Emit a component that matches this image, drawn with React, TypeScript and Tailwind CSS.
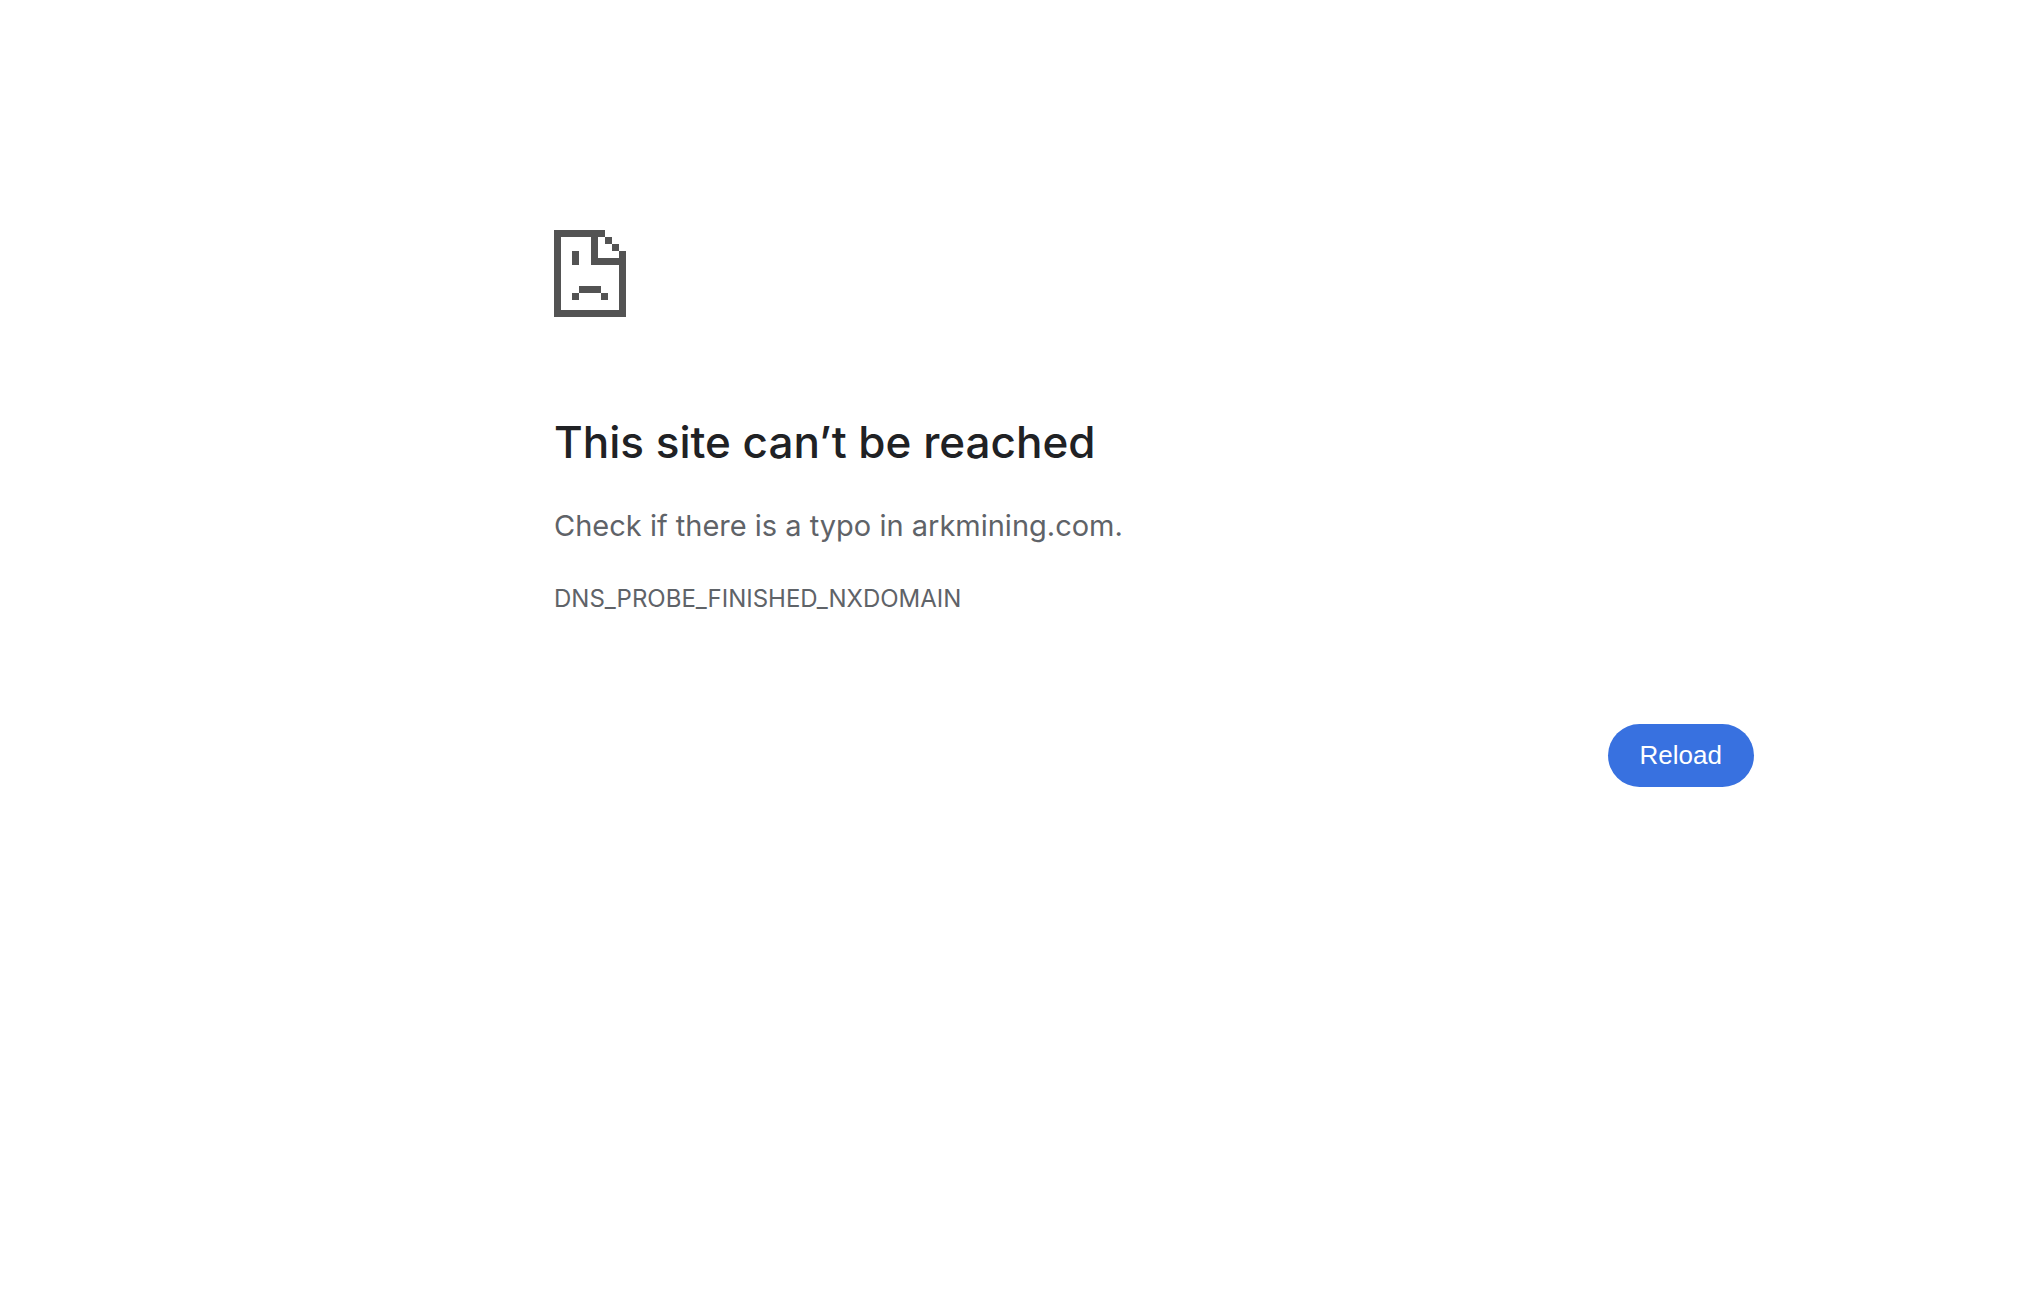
function SadPageIcon() {
  return (
    <svg
      viewBox="0 0 72 87"
      className="h-[87px] w-[72px]"
      fill="#535353"
      shapeRendering="crispEdges"
      aria-hidden="true"
    >
      <path d="M0 0H51V7H7V80H65V35H37V7H44V28H65V21H72V87H0Z" />
      <path d="M51 7h7v7h-7zM58 14h7v7h-7z" />
      <path d="M18 21h7v14h-7z" />
      <path d="M25 56h22v7H25zM18 63h7v7h-7zM47 63h7v7h-7z" />
    </svg>
  );
}

export default function App() {
  return (
    <div className="min-h-screen bg-white pt-[230px] pr-[278px] pl-[554px] font-['Inter',sans-serif] text-[#5f6368]">
      <main className="flex w-full max-w-[1200px] flex-col">
        <SadPageIcon />
        <h1 className="mt-24 text-[44px] leading-[58px] font-medium text-[#202124]">
          This site can’t be reached
        </h1>
        <p className="mt-8 text-[29px] leading-[46px]">
          Check if there is a typo in arkmining.com.
        </p>
        <p className="mt-8 text-[24px] leading-[36px]">DNS_PROBE_FINISHED_NXDOMAIN</p>
        <button
          type="button"
          className="mt-[107px] self-end rounded-full bg-[#3871e0] px-8 py-4 font-['Liberation_Sans',Arial,sans-serif] text-[26px] leading-[31px] text-white"
        >
          Reload
        </button>
      </main>
    </div>
  );
}
